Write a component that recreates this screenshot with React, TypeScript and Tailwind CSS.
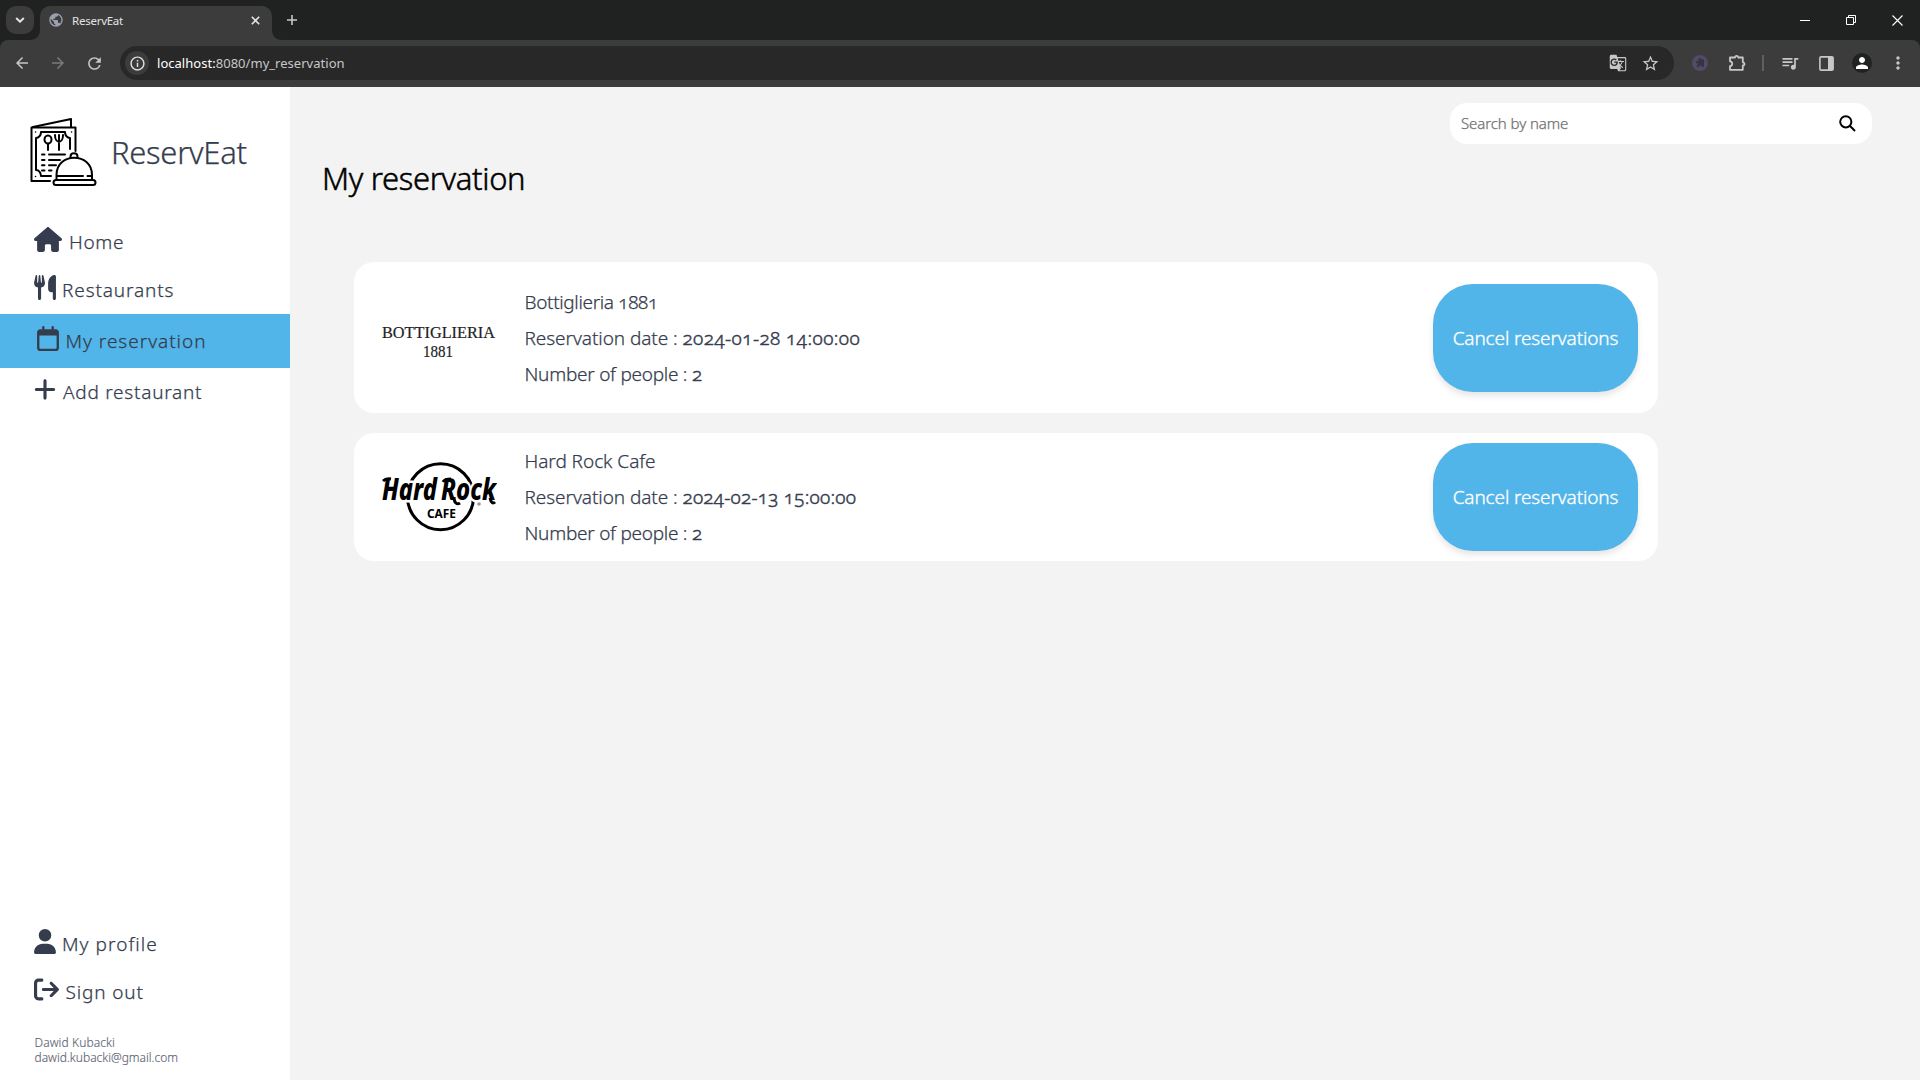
import type { ReactNode } from 'react';
import {
  FaArrowRightFromBracket,
  FaHouse,
  FaPlus,
  FaRegCalendar,
  FaUser,
  FaUtensils,
} from 'react-icons/fa6';
import {
  MdArrowBack,
  MdArrowForward,
  MdGTranslate,
  MdInfoOutline,
  MdMoreVert,
  MdPerson,
  MdPublic,
  MdQueueMusic,
  MdRefresh,
  MdStarOutline,
} from 'react-icons/md';

function Slot({ children }: { children: ReactNode }) {
  return <div className="flex w-9 shrink-0 items-center justify-center">{children}</div>;
}

function TabStrip() {
  return (
    <div className="flex h-10 items-end bg-[#202221]">
      <div className="mb-1.5 ml-1.5 flex size-7 items-center justify-center rounded-[10px] bg-[#3c3c3c]">
        <svg width="10" height="6" viewBox="0 0 10 6" fill="none" stroke="#e3e3e3" strokeWidth="2">
          <path d="M1.2 1 5 4.7 8.800 1" />
        </svg>
      </div>
      <svg className="-ml-1" width="10" height="10" viewBox="0 0 10 10">
        <path d="M10 0v10H0C6 10 10 6 10 0Z" fill="#3c3c3c" />
      </svg>
      <div className="flex h-[34px] w-[232px] items-center rounded-t-[10px] bg-[#3c3c3c] pb-1.5 pl-2 pr-[12px]">
        <MdPublic className="size-4 text-[#9aa0ad]" />
        <span className="ml-[8px] mt-px flex-1 font-['Noto_Sans'] text-[11.5px] tracking-[-0.25px] text-[#e3e3e3]">ReservEat</span>
        <svg width="9" height="9" viewBox="0 0 9 9" stroke="#e3e3e3" strokeWidth="1.600">
          <path d="M.8.8l7.400 7.400M8.200.8.8 8.200" />
        </svg>
      </div>
      <svg width="10" height="10" viewBox="0 0 10 10">
        <path d="M0 0v10h10C4 10 0 6 0 0Z" fill="#3c3c3c" />
      </svg>
      <svg className="mb-[15px] ml-[5px]" width="10" height="10" viewBox="0 0 10 10" stroke="#c7c7c7" strokeWidth="1.600">
        <path d="M5 0v10M0 5h10" />
      </svg>
      <div className="ml-auto flex h-10">
        <div className="flex w-[46px] items-center justify-center">
          <svg width="10" height="10" viewBox="0 0 10 10" stroke="#fff">
            <path d="M0 5.500h10" />
          </svg>
        </div>
        <div className="flex w-[46px] items-center justify-center">
          <svg width="10" height="10" viewBox="0 0 10 10" fill="none" stroke="#fff">
            <path d="M.5 2.500h7v7h-7zM2.500 2.500v-2h7v7h-2" />
          </svg>
        </div>
        <div className="flex w-[46px] items-center justify-center">
          <svg width="11" height="11" viewBox="0 0 11 11" stroke="#fff" strokeWidth="1.100">
            <path d="M.5.5l10 10M10.500.5l-10 10" />
          </svg>
        </div>
      </div>
    </div>
  );
}

function Toolbar() {
  return (
    <div className="bg-[#202221]">
      <div className="flex h-[47px] items-center rounded-t-lg bg-[#3c3c3c] px-1 pb-px text-[#c7c7c7]">
        <Slot><MdArrowBack className="size-[18px]" /></Slot>
        <Slot><MdArrowForward className="size-[18px] text-[#7a7a7a]" /></Slot>
        <Slot><MdRefresh className="size-[19px]" /></Slot>
        <div className="ml-2 mr-2 flex h-[34px] flex-1 items-center rounded-full bg-[#282828] pl-[5px] pr-2">
          <div className="flex size-6 items-center justify-center rounded-full bg-[#3c3c3c]">
            <MdInfoOutline className="size-[17px] text-[#e3e3e3]" />
          </div>
          <span className="ml-2 mt-px flex-1 font-['Noto_Sans'] text-[13px] tracking-[0.03px] text-[#c7c7c7]">
            <span className="text-white">localhost:</span>8080/my_reservation
          </span>
          <div className="flex w-8 justify-center"><MdGTranslate className="size-[18px]" /></div>
          <div className="flex w-8 justify-center"><MdStarOutline className="size-[19px]" /></div>
        </div>
        <Slot>
          <svg width="16" height="16" viewBox="0 0 16 16">
            <circle cx="8" cy="8" r="8" fill="#524a67" />
            <path d="M6.500 4.500a1.500 1.500 0 0 1 3 0H12v7.300H9.800L8.600 9.500 7 12H4.500l2-4-2.500.5.5-2.500h2Z" fill="#37343f" />
          </svg>
        </Slot>
        <Slot>
          <svg className="ml-px" width="18" height="18" viewBox="0 0 18 18">
            <path d="M2 3.500h5a1.600 1.600 0 0 1 3.200 0h4.600v4.800a1.600 1.600 0 0 1 0 3.200v4.300H2v-3.700c3-.3 3-4.500 0-4.800Z" fill="none" stroke="#c7c7c7" strokeWidth="1.800" strokeLinejoin="round" />
          </svg>
        </Slot>
        <div className="flex w-[18px] justify-center"><div className="h-4 w-0.5 bg-[#5f5f5f]" /></div>
        <Slot><MdQueueMusic className="size-5" /></Slot>
        <Slot>
          <svg width="15" height="15" viewBox="0 0 15 15">
            <rect x=".9" y=".9" width="13.200" height="13.200" rx="1.200" fill="none" stroke="#c7c7c7" strokeWidth="1.600" />
            <path d="M9 1h5v13H9z" fill="#c7c7c7" />
          </svg>
        </Slot>
        <Slot>
          <div className="flex size-5 items-center justify-center rounded-full bg-[#202221]">
            <MdPerson className="size-[18px] text-white" />
          </div>
        </Slot>
        <Slot><MdMoreVert className="size-5" /></Slot>
      </div>
    </div>
  );
}

function BrandLogo() {
  return (
    <svg className="shrink-0" width="67" height="69" viewBox="0 0 67 69" fill="none" stroke="#000" strokeWidth="2" strokeLinecap="round" strokeLinejoin="round">
      <path d="M45.500 33V9.500H1.500V63H20" />
      <path d="M3 9 41 1v8" />
      <path d="M40 31V20c-3 0-5-3-5-6H11c0 3-2 6-5 6v32c3 0 5 3 5 6h10" />
      <ellipse cx="18" cy="21.500" rx="3.500" ry="4" />
      <path d="M18 26v6M25 17c0 9 8 9 8 0M29 17v15" />
      <path d="M12 36.500h2.500M19 36.500h16M12 42h2.500M19 42h11M12 47.300h2.500M19 47.300h7M12 52.500h2.500M19 52.500h2.500" />
      <path d="M5.500 14h.1M41.500 14h.1M5.500 58.500h.1" strokeWidth="1.500" />
      <path d="M26.500 62V57c0-23 35.500-23 35.500 0v5M27 58h26M57.500 58h4" />
      <path d="M40.500 40v-1.500c0-4.500 7-4.500 7 0V40" />
      <rect x="23.500" y="62" width="42" height="5" rx="2.500" />
    </svg>
  );
}

interface NavItemProps {
  icon: ReactNode;
  label: string;
  className: string;
  labelClass: string;
}

function NavItem({ icon, label, className, labelClass }: NavItemProps) {
  return (
    <div className={`flex items-start ${className}`}>
      {icon}
      <span className={`mt-[3px] whitespace-nowrap text-[19px] leading-[25px] ${labelClass}`}>{label}</span>
    </div>
  );
}

function Sidebar() {
  return (
    <aside className="flex w-[290px] shrink-0 flex-col bg-white font-light text-[#353c4e] [-webkit-text-stroke:0.25px]">
      <div className="flex pl-[30px] pt-[31px]">
        <BrandLogo />
        <span className="ml-[14px] mt-[13px] text-[31px] leading-[42px] tracking-[-0.3px]">ReservEat</span>
      </div>
      <nav className="mt-[28px]">
        <NavItem className="h-12 gap-[7px] pl-[34px] pt-3" icon={<FaHouse className="h-[25px] w-[28px]" />} label="Home" labelClass="tracking-[0.7px]" />
        <NavItem className="h-[51px] gap-[6px] pl-[34px] pt-3" icon={<FaUtensils className="h-[25px] w-[22px]" />} label="Restaurants" labelClass="tracking-[0.87px]" />
        <NavItem className="h-[54px] gap-[6.5px] bg-[#52b5e9] pl-[37px] pt-3" icon={<FaRegCalendar className="h-[25px] w-[22px]" />} label="My reservation" labelClass="tracking-[0.97px]" />
        <NavItem className="h-12 gap-[7px] pl-[34px] pt-[9px]" icon={<FaPlus className="h-[25px] w-[22px]" />} label="Add restaurant" labelClass="tracking-[0.75px]" />
      </nav>
      <div className="mt-auto">
        <NavItem className="h-12 gap-[6px] pl-[34px]" icon={<FaUser className="h-[25px] w-[22px]" />} label="My profile" labelClass="tracking-[1.05px]" />
        <NavItem className="h-12 gap-[6.5px] pl-[34px]" icon={<FaArrowRightFromBracket className="h-[25px] w-[25px]" />} label="Sign out" labelClass="tracking-[0.85px]" />
      </div>
      <div className="mb-[15px] mt-[10px] pl-[34.5px] text-[12px] leading-[15px] text-[#5f6675] [-webkit-text-stroke:0.15px]">
        <p className="tracking-[0.1px]">Dawid Kubacki</p>
        <p>dawid.kubacki@gmail.com</p>
      </div>
    </aside>
  );
}

function BottiglieriaLogo() {
  return (
    <svg className="mt-[8px]" width="116" height="40" viewBox="0 0 116 40" fontFamily="Liberation Serif, serif" fill="#222" stroke="#222" strokeWidth=".2">
      <text x="1" y="15.500" fontSize="16.500" textLength="113" lengthAdjust="spacingAndGlyphs">BOTTIGLIERIA</text>
      <text x="42" y="35" fontSize="16.500" textLength="30" lengthAdjust="spacingAndGlyphs">1881</text>
    </svg>
  );
}

function HardRockLogo() {
  return (
    <svg width="116" height="72" viewBox="0 0 116 72" fontFamily="Noto Sans, sans-serif">
      <circle cx="59.500" cy="35.700" r="33" fill="none" stroke="#000" strokeWidth="3" />
      <g fontSize="30" fontWeight="800" fontStyle="italic" stroke="#fff" strokeWidth="5" strokeLinejoin="round" paintOrder="stroke">
        <text x="1" y="39" textLength="55" lengthAdjust="spacingAndGlyphs">Hard</text>
        <text x="60" y="39" textLength="55" lengthAdjust="spacingAndGlyphs">Rock</text>
      </g>
      <path d="M2 20c2-2 5-2.500 8-2M62 21c1-2 4-3 8-3M73 36c0 6 3 8 6 6M109 37c1 5 3 6 5 4" fill="none" stroke="#000" strokeWidth="3" />
      <text x="46" y="56.500" fontSize="12" fontWeight="700" textLength="29" lengthAdjust="spacingAndGlyphs">CAFE</text>
      <circle cx="98" cy="43" r="1.800" fill="#999" />
    </svg>
  );
}

interface Reservation {
  name: string;
  nameClass: string;
  date: string;
  dateClass: string;
  people: number;
  logo: ReactNode;
  height: string;
}

const reservations: Reservation[] = [
  { name: 'Bottiglieria 1881', nameClass: 'tracking-[-0.35px]', date: '2024-01-28 14:00:00', dateClass: 'tracking-[0.43px]', people: 2, logo: <BottiglieriaLogo />, height: 'h-[151px]' },
  { name: 'Hard Rock Cafe', nameClass: 'tracking-[-0.05px]', date: '2024-02-13 15:00:00', dateClass: 'tracking-[0.22px]', people: 2, logo: <HardRockLogo />, height: 'h-32' },
];

function ReservationCard({ item }: { item: Reservation }) {
  return (
    <article className={`flex items-center rounded-[20px] bg-white pl-[27px] pr-5 text-[#353c4e] ${item.height}`}>
      {item.logo}
      <div className="ml-[27.5px] flex-1 text-[19px] font-light leading-9 [-webkit-text-stroke:0.25px] [font-feature-settings:'onum']">
        <p className={item.nameClass}>{item.name}</p>
        <p className="whitespace-pre">
          <span className="tracking-[-0.07px]">Reservation date : </span>
          <span className={`[-webkit-text-stroke:0.45px] ${item.dateClass}`}>{item.date}</span>
        </p>
        <p className="tracking-[-0.26px]">
          Number of people : <span className="[-webkit-text-stroke:0.45px]">{item.people}</span>
        </p>
      </div>
      <button className="h-[108px] w-[205px] rounded-[40px] bg-[#52b5e9] pt-px text-[19px] font-light tracking-[-0.13px] text-white shadow-[0_4px_6px_rgba(0,0,0,0.1)] [-webkit-text-stroke:0.35px]">
        Cancel reservations
      </button>
    </article>
  );
}

export default function App() {
  return (
    <div className="flex h-[1080px] w-[1920px] flex-col overflow-hidden font-['Noto_Sans',sans-serif]">
      <TabStrip />
      <Toolbar />
      <div className="flex min-h-0 flex-1">
        <Sidebar />
        <main className="flex-1 bg-[#f3f3f3]">
          <div className="flex justify-end pr-12 pt-4">
            <div className="flex h-[41px] w-[422px] items-center justify-between rounded-[17px] bg-white pl-[11px] pr-[16px]">
              <span className="text-[15px] font-light tracking-[-0.08px] text-[#707070] [-webkit-text-stroke:0.25px]">Search by name</span>
              <svg width="17" height="17" viewBox="0 0 17 17" fill="none" stroke="#000" strokeWidth="2">
                <circle cx="6.800" cy="6.800" r="5.600" />
                <path d="m10.800 10.800 5.200 5.200" />
              </svg>
            </div>
          </div>
          <h1 className="ml-[32px] mt-[13px] text-[31px] font-light leading-[42px] tracking-[-0.33px] text-black [-webkit-text-stroke:0.5px]">My reservation</h1>
          <div className="ml-16 mt-[63px] flex w-[1304px] flex-col gap-5">
            {reservations.map((item) => (
              <ReservationCard key={item.name} item={item} />
            ))}
          </div>
        </main>
      </div>
    </div>
  );
}
